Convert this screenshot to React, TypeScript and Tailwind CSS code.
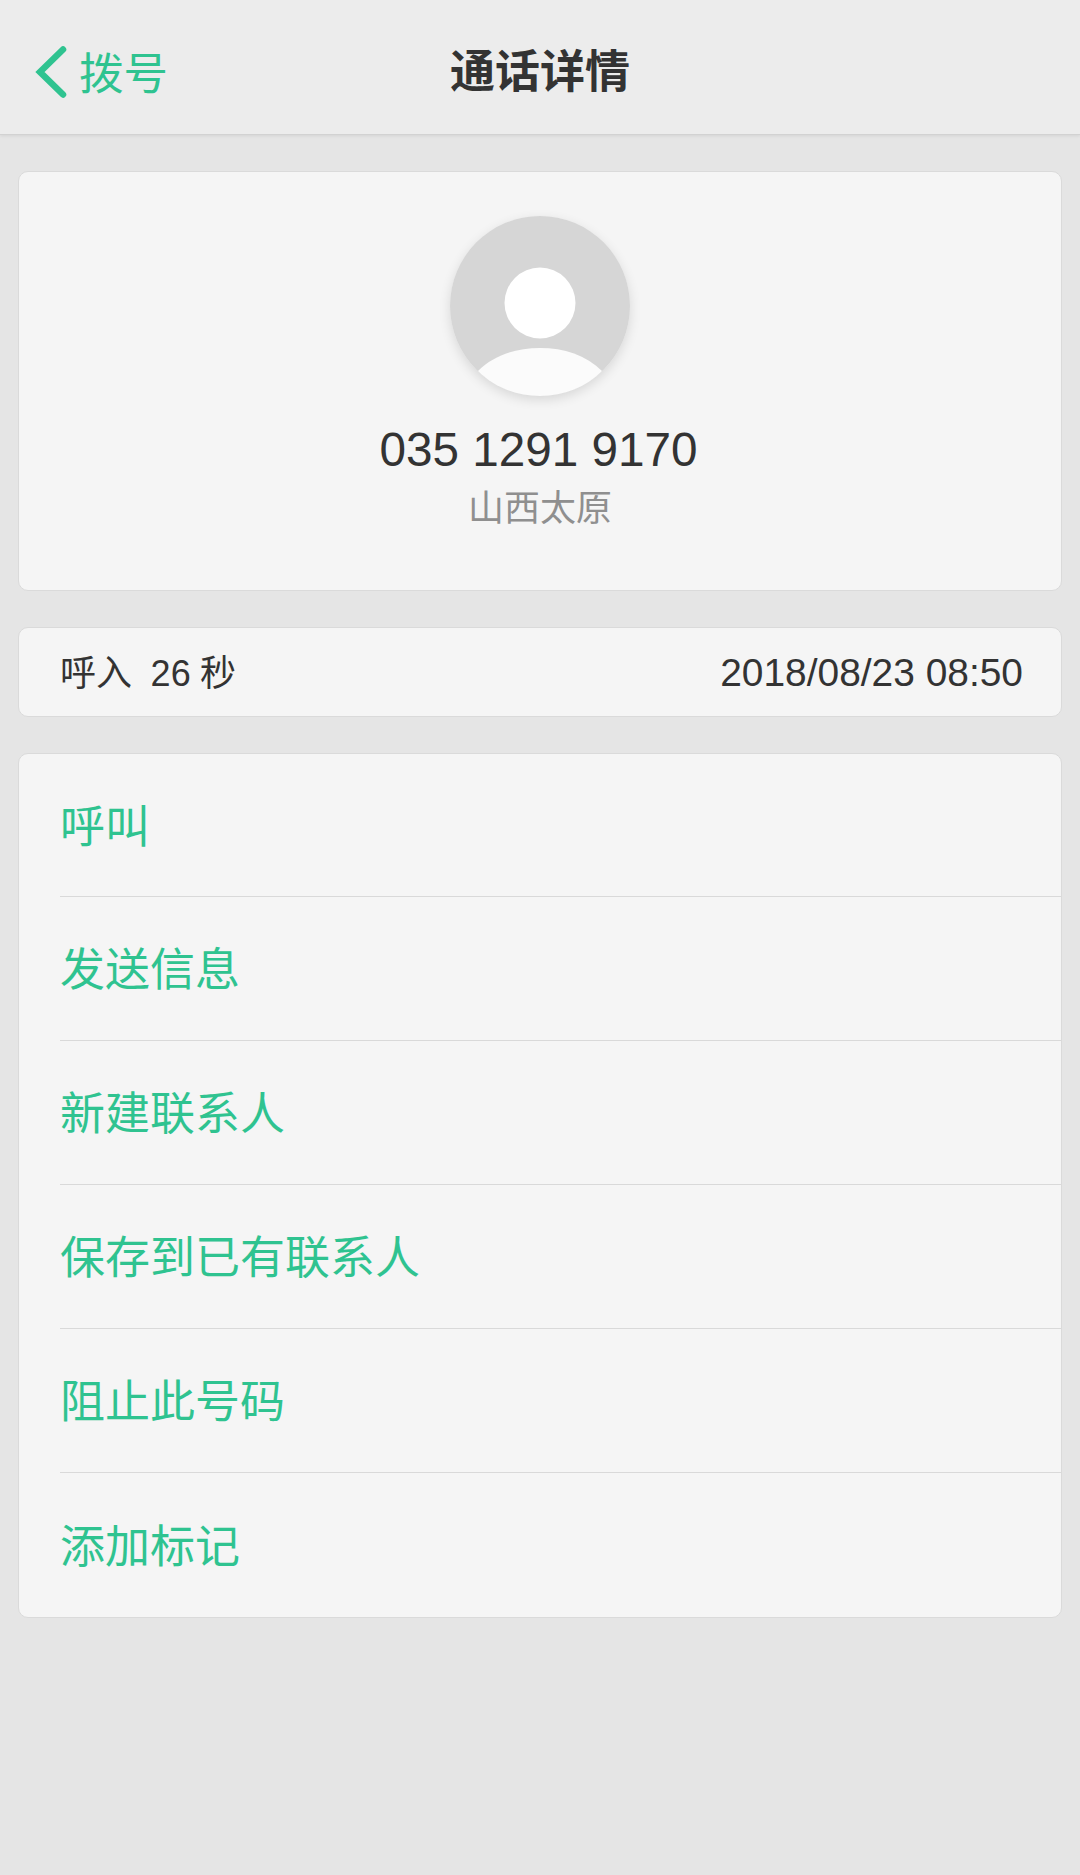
const ACTIONS = ["呼叫", "发送信息", "新建联系人", "保存到已有联系人", "阻止此号码", "添加标记"];

const FONT = "font-['Liberation_Sans','Noto_Sans_CJK_SC',sans-serif]";

const App = () => {
  return (
    <div className={`${FONT} flex min-h-[1875px] w-[1080px] flex-col bg-[#e5e5e5]`}>
      {/* top bar */}
      <div className="relative flex h-[135px] items-center justify-center border-b border-[#d2d2d2] bg-[#ececec] pt-[11px] shadow-[0_1px_3px_rgba(0,0,0,0.08)]">
        <div className="absolute left-[35px] top-[46px] flex items-start gap-[12px] text-[#2fc390]">
          <svg width="32" height="52" viewBox="0 0 32 52" fill="none">
            <path d="M28 3.5 L5 26 L28 48.5" stroke="currentColor" strokeWidth="6.5" strokeLinecap="round" />
          </svg>
          <span className="mt-[3px] text-[44.5px] leading-[52px]">拨号</span>
        </div>
        <span className="text-[45px] font-bold leading-[52px] text-[#333333]">通话详情</span>
      </div>

      <div className="flex flex-col gap-[36px] px-[18px] pt-[36px]">
        {/* contact card */}
        <div className="flex h-[420px] flex-col items-center rounded-[10px] border border-[#dadada] bg-[#f5f5f5] pt-[44px]">
          <div className="h-[180px] w-[180px] rounded-full shadow-[0_4px_12px_rgba(0,0,0,0.12)]">
            <svg width="180" height="180" viewBox="0 0 180 180">
              <circle cx="90" cy="90" r="90" fill="#d6d6d6" />
              <circle cx="90" cy="87" r="35.5" fill="#ffffff" />
              <path d="M28 155 C44 139 66 132 90 132 C114 132 136 139 152 155 C136 171 114 180 90 180 C66 180 44 171 28 155 Z" fill="#fbfbfb" />
            </svg>
          </div>
          <div className="mt-[26px] pr-[3px] text-[47.7px] leading-[56px] text-[#333333]">035 1291 9170</div>
          <div className="mt-[8px] text-[36px] leading-[46px] text-[#8f8f8f]">山西太原</div>
        </div>

        {/* last call */}
        <div className="flex h-[90px] items-center justify-between rounded-[10px] border border-[#dadada] bg-[#f5f5f5] pl-[41px] pr-[38px] pt-[3px] text-[#333333]">
          <span className="whitespace-pre text-[36px] leading-none [word-spacing:-0.7px]">呼入  26 秒</span>
          <span className="text-[38.9px] leading-none">2018/08/23 08:50</span>
        </div>

        {/* actions */}
        <div className="flex flex-col rounded-[10px] border border-[#dadada] bg-[#f5f5f5] pl-[41px]">
          {ACTIONS.map((label, i) => (
            <div
              key={label}
              className={`flex items-center pt-[4px] text-[45px] leading-none text-[#2fc390] ${
                i === 0 ? "h-[143px]" : "h-[144px]"
              } ${i < ACTIONS.length - 1 ? "border-b border-[#d9d9d9]" : ""}`}
            >
              {label}
            </div>
          ))}
        </div>
      </div>
    </div>
  );
};

export default App;
